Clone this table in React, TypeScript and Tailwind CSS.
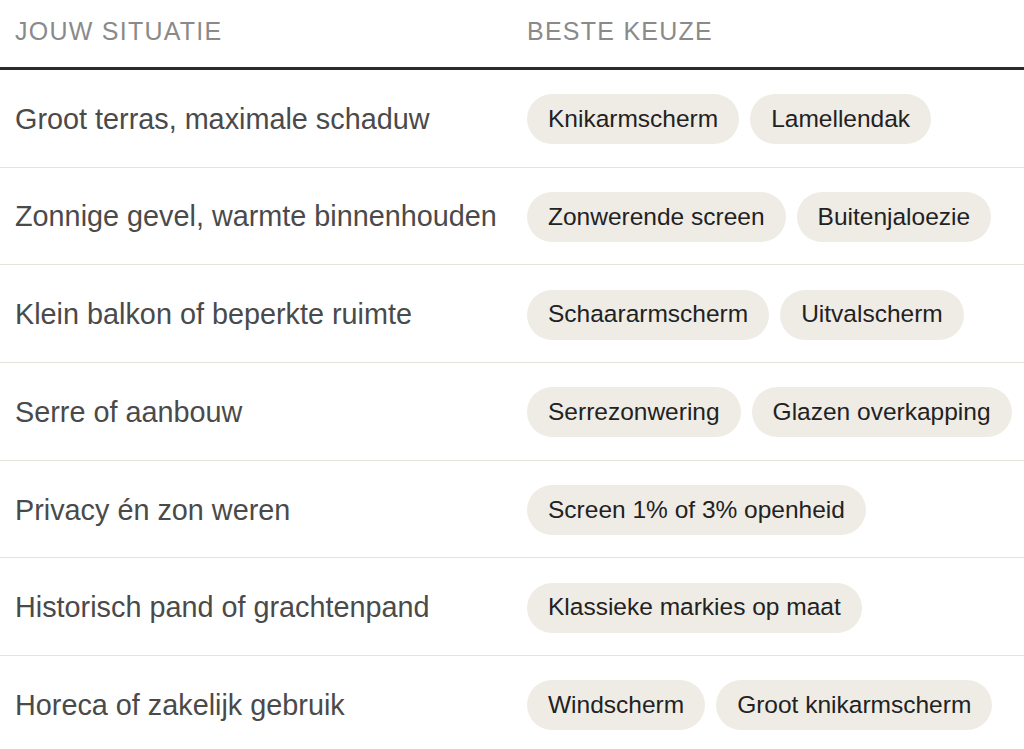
const rows: { situation: string; choices: string[] }[] = [
    { situation: "Groot terras, maximale schaduw", choices: ["Knikarmscherm", "Lamellendak"] },
    { situation: "Zonnige gevel, warmte binnenhouden", choices: ["Zonwerende screen", "Buitenjaloezie"] },
    { situation: "Klein balkon of beperkte ruimte", choices: ["Schaararmscherm", "Uitvalscherm"] },
    { situation: "Serre of aanbouw", choices: ["Serrezonwering", "Glazen overkapping"] },
    { situation: "Privacy én zon weren", choices: ["Screen 1% of 3% openheid"] },
    { situation: "Historisch pand of grachtenpand", choices: ["Klassieke markies op maat"] },
    { situation: "Horeca of zakelijk gebruik", choices: ["Windscherm", "Groot knikarmscherm"] },
];

const App = () => {
    return (
        <div className="min-h-screen bg-white [font-family:'Liberation_Sans',Arial,sans-serif]">
            <div className="grid grid-cols-[512px_1fr] border-b-[3px] border-[#2b2b2b] h-[70px] items-center pb-[3px]">
                <div className="px-[15px] text-[25px] tracking-[0.05em] text-[#8a8a8a] uppercase">
                    Jouw situatie
                </div>
                <div className="px-[15px] text-[25px] tracking-[0.05em] text-[#8a8a8a] uppercase">
                    Beste keuze
                </div>
            </div>
            {rows.map((row) => (
                <div
                    key={row.situation}
                    className="grid grid-cols-[512px_1fr] items-center border-b border-[#e6e3dd] h-[97.7px] pt-[2px]"
                >
                    <div className="px-[15px] text-[28.8px] text-[#4a4a4a] whitespace-nowrap">
                        {row.situation}
                    </div>
                    <div className="px-[15px] flex gap-[11px] whitespace-nowrap">
                        {row.choices.map((choice) => (
                            <span
                                key={choice}
                                className="inline-flex items-center h-[50px] px-[21px] rounded-full bg-[#efece6] text-[24.5px] text-[#222222]"
                            >
                                {choice}
                            </span>
                        ))}
                    </div>
                </div>
            ))}
        </div>
    );
};

export default App;
